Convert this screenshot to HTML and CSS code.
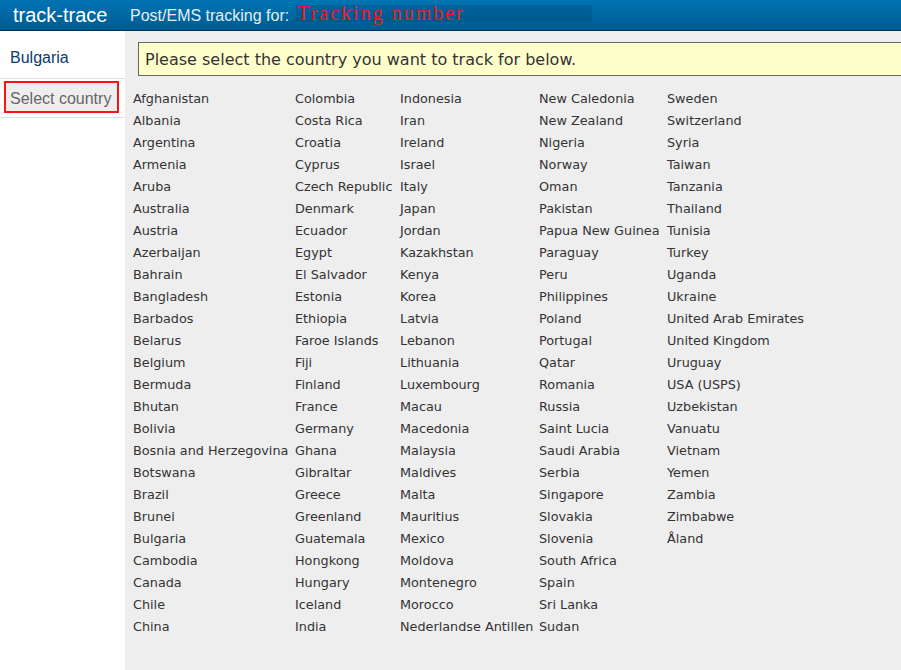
FILE: index.html
```html
<!DOCTYPE html>
<html>
<head>
<meta charset="utf-8">
<title>track-trace</title>
<link rel="stylesheet" href="styles.css">
</head>
<body>
<header class="topbar">
  <span class="logo">track-trace</span>
  <span class="label">Post/EMS tracking for:</span>
  <span class="tracking"><span class="tracking-text">Tracking number</span></span>
</header>
<div class="layout">
  <nav class="sidebar">
    <div class="side-item"><a class="side-link" href="#">Bulgaria</a></div>
    <div class="side-item side-current"><span class="current-box">Select country</span></div>
  </nav>
  <main class="main">
    <div class="notice">Please select the country you want to track for below.</div>
    <div class="countries">
      <div class="col">
        <a href="#">Afghanistan</a><a href="#">Albania</a><a href="#">Argentina</a><a href="#">Armenia</a><a href="#">Aruba</a><a href="#">Australia</a><a href="#">Austria</a><a href="#">Azerbaijan</a><a href="#">Bahrain</a><a href="#">Bangladesh</a><a href="#">Barbados</a><a href="#">Belarus</a><a href="#">Belgium</a><a href="#">Bermuda</a><a href="#">Bhutan</a><a href="#">Bolivia</a><a href="#">Bosnia and Herzegovina</a><a href="#">Botswana</a><a href="#">Brazil</a><a href="#">Brunei</a><a href="#">Bulgaria</a><a href="#">Cambodia</a><a href="#">Canada</a><a href="#">Chile</a><a href="#">China</a>
      </div>
      <div class="col">
        <a href="#">Colombia</a><a href="#">Costa Rica</a><a href="#">Croatia</a><a href="#">Cyprus</a><a href="#">Czech Republic</a><a href="#">Denmark</a><a href="#">Ecuador</a><a href="#">Egypt</a><a href="#">El Salvador</a><a href="#">Estonia</a><a href="#">Ethiopia</a><a href="#">Faroe Islands</a><a href="#">Fiji</a><a href="#">Finland</a><a href="#">France</a><a href="#">Germany</a><a href="#">Ghana</a><a href="#">Gibraltar</a><a href="#">Greece</a><a href="#">Greenland</a><a href="#">Guatemala</a><a href="#">Hongkong</a><a href="#">Hungary</a><a href="#">Iceland</a><a href="#">India</a>
      </div>
      <div class="col">
        <a href="#">Indonesia</a><a href="#">Iran</a><a href="#">Ireland</a><a href="#">Israel</a><a href="#">Italy</a><a href="#">Japan</a><a href="#">Jordan</a><a href="#">Kazakhstan</a><a href="#">Kenya</a><a href="#">Korea</a><a href="#">Latvia</a><a href="#">Lebanon</a><a href="#">Lithuania</a><a href="#">Luxembourg</a><a href="#">Macau</a><a href="#">Macedonia</a><a href="#">Malaysia</a><a href="#">Maldives</a><a href="#">Malta</a><a href="#">Mauritius</a><a href="#">Mexico</a><a href="#">Moldova</a><a href="#">Montenegro</a><a href="#">Morocco</a><a href="#">Nederlandse Antillen</a>
      </div>
      <div class="col">
        <a href="#">New Caledonia</a><a href="#">New Zealand</a><a href="#">Nigeria</a><a href="#">Norway</a><a href="#">Oman</a><a href="#">Pakistan</a><a href="#">Papua New Guinea</a><a href="#">Paraguay</a><a href="#">Peru</a><a href="#">Philippines</a><a href="#">Poland</a><a href="#">Portugal</a><a href="#">Qatar</a><a href="#">Romania</a><a href="#">Russia</a><a href="#">Saint Lucia</a><a href="#">Saudi Arabia</a><a href="#">Serbia</a><a href="#">Singapore</a><a href="#">Slovakia</a><a href="#">Slovenia</a><a href="#">South Africa</a><a href="#">Spain</a><a href="#">Sri Lanka</a><a href="#">Sudan</a>
      </div>
      <div class="col">
        <a href="#">Sweden</a><a href="#">Switzerland</a><a href="#">Syria</a><a href="#">Taiwan</a><a href="#">Tanzania</a><a href="#">Thailand</a><a href="#">Tunisia</a><a href="#">Turkey</a><a href="#">Uganda</a><a href="#">Ukraine</a><a href="#">United Arab Emirates</a><a href="#">United Kingdom</a><a href="#">Uruguay</a><a href="#">USA (USPS)</a><a href="#">Uzbekistan</a><a href="#">Vanuatu</a><a href="#">Vietnam</a><a href="#">Yemen</a><a href="#">Zambia</a><a href="#">Zimbabwe</a><a href="#">Åland</a>
      </div>
    </div>
  </main>
</div>
</body>
</html>
```
FILE: styles.css
```css
html, body {
  margin: 0;
  padding: 0;
  height: 100%;
  overflow: hidden;
}
body {
  font-family: "Liberation Sans", Arial, sans-serif;
  background: #eeeeee;
  display: flex;
  flex-direction: column;
}
.topbar {
  height: 30px;
  border-bottom: 1px solid #00304f;
  background: linear-gradient(to bottom, #0073b3 0%, #0068a3 50%, #005a8d 100%);
  display: flex;
  align-items: center;
  flex-shrink: 0;
}
.logo {
  color: #ffffff;
  font-size: 20px;
  margin-left: 13px;
  width: 117px;
}
.label {
  color: #e4eef5;
  font-size: 16px;
  margin-top: 1px;
}
.tracking {
  margin-left: 7px;
  width: 296px;
  height: 17px;
  margin-top: -4px;
  background: rgba(0, 35, 70, 0.16);
  position: relative;
}
.tracking-text {
  position: absolute;
  left: 1px;
  top: -3px;
  font-family: "Liberation Serif", "Times New Roman", serif;
  font-size: 20px;
  letter-spacing: 2px;
  color: #ee1c1c;
  line-height: 22px;
  white-space: nowrap;
}
.layout {
  display: flex;
  flex: 1;
}
.sidebar {
  width: 125px;
  background: #ffffff;
  flex-shrink: 0;
}
.side-item {
  border-bottom: 1px solid #dddddd;
}
.side-item:first-child {
  display: flex;
  align-items: center;
  padding-left: 10px;
  padding-top: 7px;
  box-sizing: border-box;
  height: 48px;
}
.side-link {
  color: #0a3a6e;
  font-size: 16px;
  text-decoration: none;
}
.side-current {
  padding: 2px 6px 4px 4px;
}
.current-box {
  display: block;
  border: 2px solid #ff1111;
  background: #eeeeee;
  color: #666666;
  font-size: 16px;
  height: 28px;
  line-height: 32px;
  padding-left: 4px;
  white-space: nowrap;
}
.main {
  flex: 1;
  padding: 11px 0 0 8px;
  font-family: "DejaVu Sans", Verdana, sans-serif;
  color: #333333;
}
.notice {
  margin-left: 5px;
  margin-right: -40px;
  background: #ffffcc;
  border: 1px solid #666666;
  height: 32px;
  line-height: 34px;
  padding-left: 6px;
  font-size: 16px;
  color: #333333;
}
.countries {
  display: grid;
  grid-template-columns: 162px 105px 139px 128px auto;
  margin-top: 12px;
}
.col {
  display: flex;
  flex-direction: column;
}
.col a {
  font-size: 12.8px;
  line-height: 22px;
  color: #333333;
  text-decoration: none;
  white-space: nowrap;
}
```
